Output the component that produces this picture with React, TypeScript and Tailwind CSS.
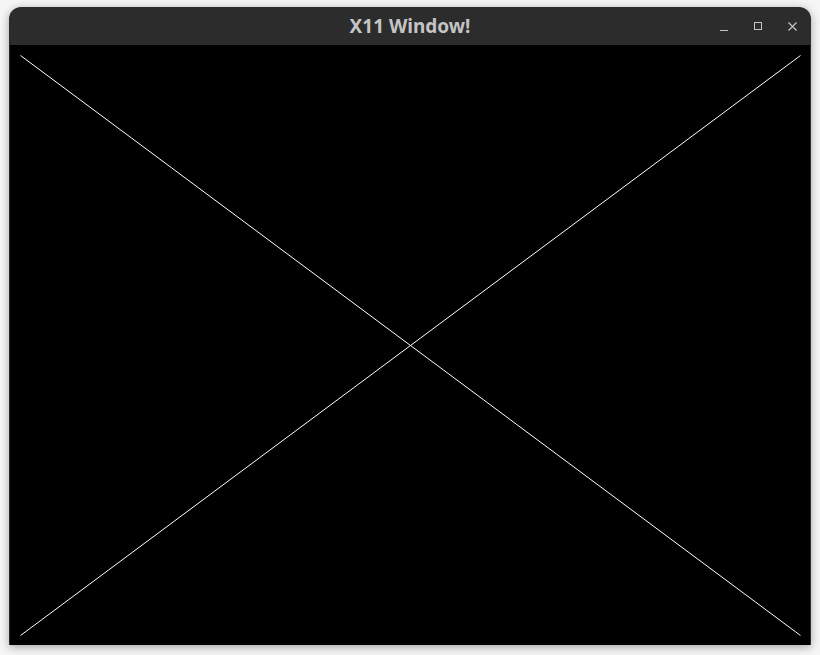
export default function App() {
  return (
    <div className="h-[655px] w-[820px] overflow-hidden bg-[#f6f6f6] pl-[9px] pt-[7px]">
      <div className="flex h-[638px] w-[802px] flex-col overflow-hidden rounded-t-[12px] bg-[#2c2c2c] shadow-[0_2px_10px_rgba(0,0,0,0.35)]">
        <div className="relative flex h-[38px] shrink-0 items-center justify-center">
          <span
            className="text-[19px] font-bold text-[#c4c4c4]"
            style={{ fontFamily: '"Noto Sans", "Open Sans", sans-serif' }}
          >
            X11 Window!
          </span>
          <div className="absolute right-0 top-0 flex h-full items-center gap-[26px] pr-[14px]">
            <svg width="8" height="8" viewBox="0 0 8 8" className="mt-[4px]">
              <line x1="0" y1="6.5" x2="8" y2="6.5" stroke="#c4c4c4" strokeWidth="1" />
            </svg>
            <svg width="8" height="8" viewBox="0 0 8 8">
              <rect x="0.5" y="0.5" width="7" height="7" fill="none" stroke="#c4c4c4" strokeWidth="1" />
            </svg>
            <svg width="9" height="9" viewBox="0 0 9 9">
              <path d="M0.5 0.5 L8.5 8.5 M8.5 0.5 L0.5 8.5" stroke="#c4c4c4" strokeWidth="1.2" />
            </svg>
          </div>
        </div>
        <div className="flex flex-1 px-px pb-0">
          <svg width="800" height="600" viewBox="0 0 800 600" className="block bg-black">
            <line x1="10.5" y1="10.5" x2="790.5" y2="590.5" stroke="#fff" strokeWidth="1" />
            <line x1="790.5" y1="10.5" x2="10.5" y2="590.5" stroke="#fff" strokeWidth="1" />
          </svg>
        </div>
      </div>
    </div>
  );
}
